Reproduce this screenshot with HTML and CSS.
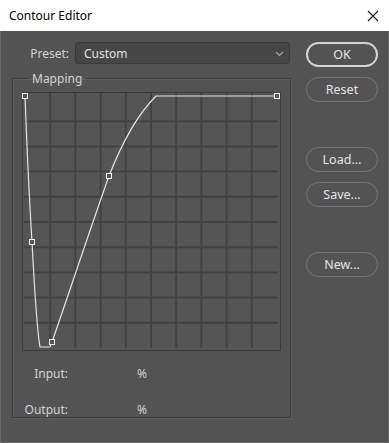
FILE: index.html
```html
<!DOCTYPE html>
<html lang="en">
<head>
  <meta charset="UTF-8" />
  <title>Contour Editor</title>
  <link rel="stylesheet" href="styles.css">
</head>
<body>

  <div class="window">
    <div class="titlebar">
      <span class="title">Contour Editor</span>
      <span class="close">
        <svg width="12" height="12" viewBox="0 0 12 12">
          <path d="M1 1 L11 11 M11 1 L1 11" stroke="#1a1a1a" stroke-width="1.1" fill="none"/>
        </svg>
      </span>
    </div>

    <div class="content">
      <div class="main">
        <div class="preset-row">
          <label class="preset-label">Preset:</label>
          <div class="select">
            <span>Custom</span>
            <svg class="chevron" width="9" height="6" viewBox="0 0 9 6">
              <path d="M1 1 L4.5 4.5 L8 1" stroke="#a8a8a8" stroke-width="1.1" fill="none"/>
            </svg>
          </div>
        </div>

        <fieldset class="mapping">
          <legend>Mapping</legend>

          <!-- contour graph, drawn in page coordinates -->
          <svg class="graph" width="260" height="260" viewBox="22 92 260 260">
            <rect x="22.5" y="92.5" width="258" height="258" fill="#555555" stroke="#3c3c3c"/>
            <g stroke="#424242" stroke-width="2">
              <line x1="50.2" y1="93" x2="50.2" y2="348"/>
              <line x1="75.4" y1="93" x2="75.4" y2="348"/>
              <line x1="100.6" y1="93" x2="100.6" y2="348"/>
              <line x1="125.8" y1="93" x2="125.8" y2="348"/>
              <line x1="151" y1="93" x2="151" y2="348"/>
              <line x1="176.2" y1="93" x2="176.2" y2="348"/>
              <line x1="201.4" y1="93" x2="201.4" y2="348"/>
              <line x1="226.6" y1="93" x2="226.6" y2="348"/>
              <line x1="251.8" y1="93" x2="251.8" y2="348"/>
              <line x1="24" y1="121.2" x2="278" y2="121.2"/>
              <line x1="24" y1="146.4" x2="278" y2="146.4"/>
              <line x1="24" y1="171.6" x2="278" y2="171.6"/>
              <line x1="24" y1="196.8" x2="278" y2="196.8"/>
              <line x1="24" y1="222" x2="278" y2="222"/>
              <line x1="24" y1="247.2" x2="278" y2="247.2"/>
              <line x1="24" y1="272.4" x2="278" y2="272.4"/>
              <line x1="24" y1="297.6" x2="278" y2="297.6"/>
              <line x1="24" y1="322.8" x2="278" y2="322.8"/>
            </g>
            <path class="curve" d="M25 96 C27 150 30 210 32 242 C34 280 37 330 40 347 L50 347 L52 342 C70 290 95 215 109 176 C125 135 140 112 156 96 L277 96"/>
            <g class="handle">
              <rect x="22.5" y="93.5" width="5" height="5"/>
              <rect x="29.5" y="239.5" width="5" height="5"/>
              <rect x="49.5" y="339.5" width="5" height="5"/>
              <rect x="106.5" y="173.5" width="5" height="5"/>
              <rect x="274.5" y="93.5" width="5" height="5"/>
            </g>
          </svg>

          <div class="readout">
            <span class="readout-label">Input:</span>
            <span class="readout-unit">%</span>
            <span class="readout-label">Output:</span>
            <span class="readout-unit">%</span>
          </div>
        </fieldset>
      </div>

      <div class="buttons">
        <button class="btn btn-default">OK</button>
        <button class="btn">Reset</button>
        <button class="btn group-gap">Load...</button>
        <button class="btn">Save...</button>
        <button class="btn group-gap">New...</button>
      </div>
    </div>
  </div>

</body>
</html>
```

FILE: styles.css
```css
body {
  margin: 0;
  background: #535353;
  font-family: 'Noto Sans', 'Open Sans', sans-serif;
}

.window {
  width: 389px;
  height: 443px;
  box-sizing: border-box;
  background: #535353;
  border: 1px solid #6c6c6c;
  border-top: none;
  display: flex;
  flex-direction: column;
}

.titlebar {
  height: 31px;
  margin: 0 -1px;
  background: #ffffff;
  display: flex;
  align-items: center;
  justify-content: space-between;
  padding: 0 10px 0 9px;
}

.title {
  font-size: 12px;
  color: #000000;
}

.close {
  display: flex;
}

.content {
  display: flex;
  padding: 11px 0 0 11px;
  gap: 15px;
}

.main {
  width: 279px;
  display: flex;
  flex-direction: column;
}

.preset-row {
  display: flex;
  align-items: center;
  gap: 6px;
  height: 22px;
}

.preset-label {
  width: 57px;
  text-align: right;
  font-size: 12px;
  color: #d2d2d2;
}

.select {
  flex: 1;
  height: 22px;
  box-sizing: border-box;
  margin-right: 1px;
  background: #464646;
  border: 1px solid #3b3b3b;
  border-radius: 3px;
  display: flex;
  align-items: center;
  justify-content: space-between;
  padding: 0 5px 0 8px;
  font-size: 12px;
  color: #e2e2e2;
}

.chevron {
  margin-top: 2px;
}

.mapping {
  margin: 6px 0 0 0;
  padding: 5px 0 0 9px;
  height: 348px;
  box-sizing: border-box;
  border: 1px solid #3e3e3e;
  box-shadow: inset 1px 1px 0 #5e5e5e, 1px 1px 0 #5e5e5e;
}

.mapping legend {
  margin-left: 6px;
  padding: 0 4px;
  font-size: 12px;
  color: #d2d2d2;
}

.graph {
  display: block;
}

.curve {
  fill: none;
  stroke: #e4e4e4;
  stroke-width: 1.2;
}

.handle rect {
  fill: #555555;
  stroke: #f0f0f0;
  stroke-width: 1;
}

.readout {
  display: grid;
  grid-template-columns: 46px auto;
  column-gap: 69px;
  row-gap: 19px;
  margin-top: 13px;
  font-size: 12px;
  color: #d2d2d2;
}

.readout-label {
  text-align: right;
}

.buttons {
  display: flex;
  flex-direction: column;
  gap: 10px;
  width: 72px;
}

.btn {
  height: 25px;
  box-sizing: border-box;
  border: 1px solid #767676;
  border-radius: 13px;
  background: #535353;
  color: #e4e4e4;
  font-family: 'Noto Sans', 'Open Sans', sans-serif;
  font-size: 12.5px;
  padding: 0;
  cursor: pointer;
}

.btn-default {
  border: 2px solid #d4d4d4;
}

.group-gap {
  margin-top: 35px;
}
```
